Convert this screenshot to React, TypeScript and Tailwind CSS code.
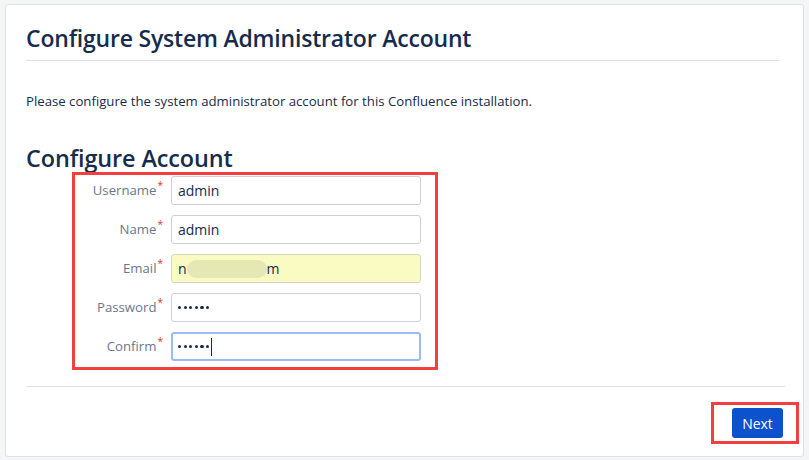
import React from "react";

const rows = [
  { label: "Username", value: "admin", type: "text" },
  { label: "Name", value: "admin", type: "text" },
  { label: "Email", value: "email", type: "email" },
  { label: "Password", value: "", type: "password" },
  { label: "Confirm", value: "", type: "confirm" },
];

function Dots() {
  return (
    <span className="flex items-center gap-[2.4px]">
      {[0, 1, 2, 3, 4, 5].map((i) => (
        <span key={i} className="w-[3.2px] h-[3.2px] rounded-full bg-[#172b4d]" />
      ))}
    </span>
  );
}

function Field({ label, value, type }: { label: string; value: string; type: string }) {
  const box =
    type === "email"
      ? "bg-[#fafac3] border-[#d6d6c0]"
      : type === "confirm"
        ? "bg-white border-[#9bbcf2] border-2"
        : "bg-white border-[#cdcfd4]";
  return (
    <div className="flex items-center h-[29px]">
      <div className="w-[88px] flex justify-end text-[13.2px] text-[#6b778c]">
        <span>{label}</span>
        <span className="text-[#de350b] text-[10px] leading-none -mt-[1px] ml-[1px]">*</span>
      </div>
      <div
        className={`ml-[8px] w-[250px] h-[29px] rounded-[3px] border flex items-center text-[14px] text-[#172b4d] ${box} ${type === "confirm" ? "pl-[5px]" : "pl-[6px]"}`}
      >
        {type === "email" ? (
          <span className="relative flex items-center">
            <span>n</span>
            <span className="inline-block w-[80px] h-[18px] rounded-[9px] bg-[#e6e8b4]" />
            <span>m</span>
          </span>
        ) : type === "password" || type === "confirm" ? (
          <span className="flex items-center">
            <Dots />
            {type === "confirm" && <span className="ml-[2px] w-[1px] h-[18px] bg-[#172b4d]" />}
          </span>
        ) : (
          <span>{value}</span>
        )}
      </div>
    </div>
  );
}

export default function App() {
  return (
    <div
      className="w-[809px] h-[460px] bg-[#f4f5f7] pt-[4px] pl-[5px] pr-[5px] pb-[3px]"
      style={{ fontFamily: '"Open Sans", "Noto Sans", sans-serif' }}
    >
      <div className="h-full bg-white border border-[#dfe1e6] rounded-[3px] pl-[20px] pr-[18px] flex flex-col">
        <h1 className="mt-[18px] text-[23px] leading-[30px] text-[#172b4d] font-semibold tracking-[-0.2px]">
          Configure System Administrator Account
        </h1>
        <div className="mt-[7px] mr-[6px] h-[1px] bg-[#dfe1e6]" />
        <p className="mt-[30px] text-[13.2px] leading-[20px] text-[#172b4d]">
          Please configure the system administrator account for this Confluence installation.
        </p>
        <h2 className="mt-[32px] text-[23.4px] leading-[30px] text-[#172b4d] font-semibold tracking-[-0.1px]">
          Configure Account
        </h2>
        <div className="ml-[46px] -mt-[1px] w-[366px] border-[3px] border-[#f33f3f] pt-[1px] pb-[6px] flex flex-col gap-[10px]">
          {rows.map((r) => (
            <Field key={r.label} {...r} />
          ))}
        </div>
        <div className="mt-[16px] h-[1px] bg-[#dfe1e6]" />
        <div className="flex justify-end mt-[15px] -mr-[14px]">
          <div className="border-[3px] border-[#f33f3f] w-[88px] h-[42px] flex items-center pl-[18px]">
            <button className="w-[51px] h-[30px] rounded-[3px] bg-[#0c52cc] text-white text-[14px]">
              Next
            </button>
          </div>
        </div>
      </div>
    </div>
  );
}
